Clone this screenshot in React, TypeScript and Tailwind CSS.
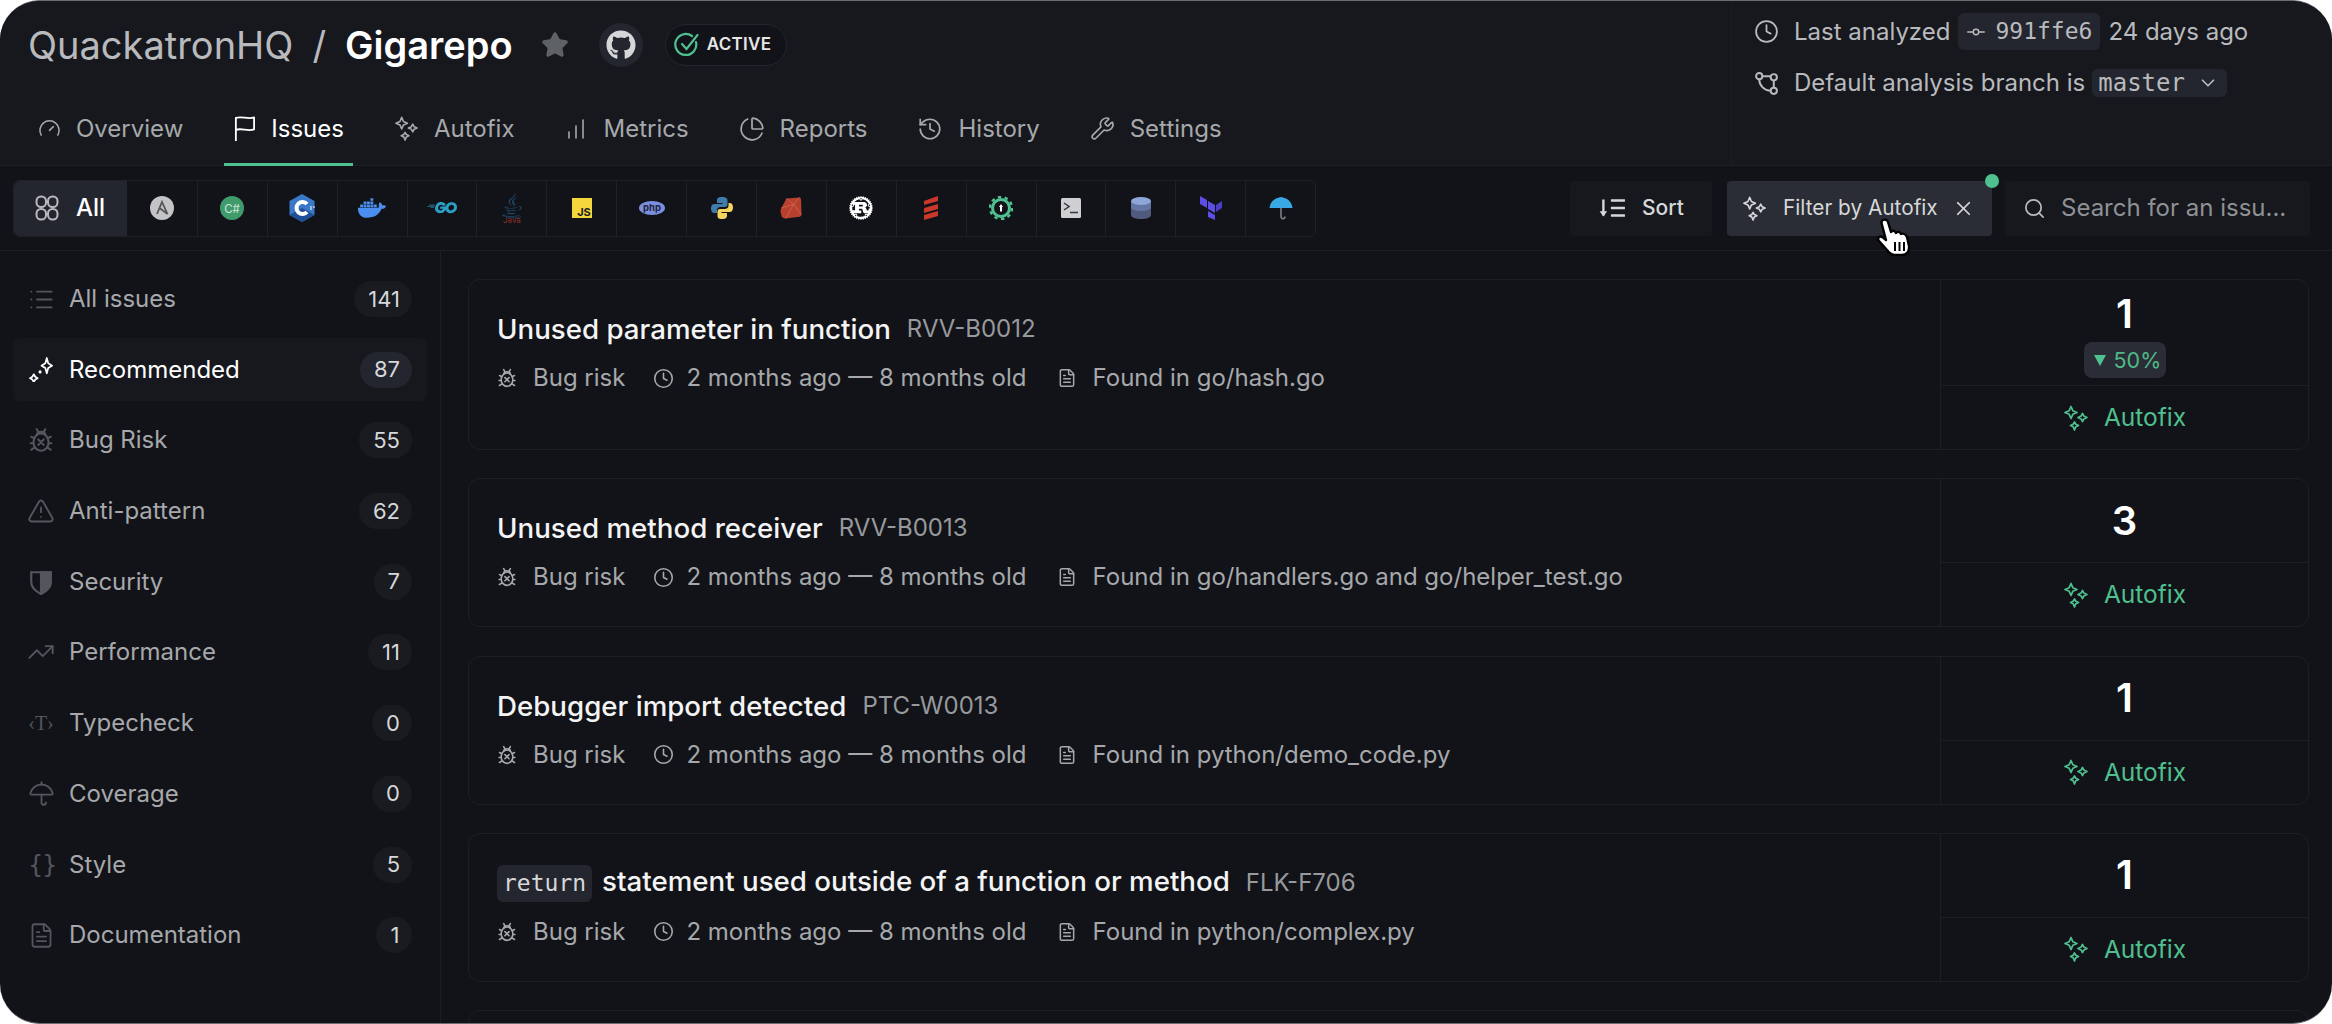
import type { ReactNode } from "react";
import {
    ChartNoAxesColumnIncreasing,
    ChartPie,
    ChevronDown,
    Clock,
    FileText,
    Gauge,
    GitCommitHorizontal,
    History,
    List,
    Search,
    Star,
    TrendingUp,
    TriangleAlert,
    Umbrella,
    Wrench,
    X,
} from "lucide-react";
import { FaDocker, FaGithub, FaJava, FaRust } from "react-icons/fa";
import { FaGolang } from "react-icons/fa6";

const mono = "[font-family:'DejaVu_Sans_Mono',monospace]";

function Sparkles({ className }: { className?: string }) {
    return (
        <svg viewBox="0 0 26 26" fill="none" stroke="currentColor" strokeWidth="1.7" strokeLinejoin="round" className={className}>
            <path d="M8 1.5 L9.8 5.7 L14 7.5 L9.8 9.3 L8 13.5 L6.2 9.3 L2 7.5 L6.2 5.7 Z" />
            <path d="M19.5 8.5 L20.9 11.1 L24 12.5 L20.9 13.9 L19.5 16.5 L18.1 13.9 L15 12.5 L18.1 11.1 Z" />
            <path d="M11.5 17 L12.8 19.2 L15.5 20.5 L12.8 21.8 L11.5 25 L10.2 21.8 L7.5 20.5 L10.2 19.2 Z" />
        </svg>
    );
}

function RecommendedIcon({ className }: { className?: string }) {
    return (
        <svg viewBox="0 0 26 26" fill="none" stroke="currentColor" strokeWidth="1.8" strokeLinejoin="round" className={className}>
            <path d="M18.5 1 L20 6.5 L24 9 L20 11.5 L18.5 17 L17 11.5 L13 9 L17 6.5 Z" />
            <path d="M5 18 L6.5 20.5 L9 22 L6.5 23.5 L5 26 L3.5 23.5 L1 22 L3.5 20.5 Z" />
            <circle cx="11.5" cy="15.5" r="1.6" fill="currentColor" stroke="none" />
        </svg>
    );
}

function BugIcon({ className }: { className?: string }) {
    return (
        <svg viewBox="0 0 24 24" fill="none" stroke="currentColor" strokeWidth="1.9" strokeLinecap="round" className={className}>
            <ellipse cx="12" cy="14" rx="7" ry="8" />
            <path d="M8 7.5 C8 3.5 16 3.5 16 7.5" />
            <path d="M9.5 11.5 L14.5 16.5 M14.5 11.5 L9.5 16.5" />
            <path d="M8 2 L9.5 4.5 M16 2 L14.5 4.5 M3 9 L6 10.5 M21 9 L18 10.5 M2.5 15 L5 15 M21.5 15 L19 15 M3 21 L6 19 M21 21 L18 19" />
        </svg>
    );
}

function ShieldHalf({ className }: { className?: string }) {
    return (
        <svg viewBox="0 0 24 24" fill="none" stroke="currentColor" strokeWidth="2" className={className}>
            <path d="M3 3 H21 V12 C21 17 17 20.5 12 23 C7 20.5 3 17 3 12 Z" />
            <path d="M12 3 H21 V12 C21 17 17 20.5 12 23 Z" fill="currentColor" />
        </svg>
    );
}

function BranchIcon({ className }: { className?: string }) {
    return (
        <svg viewBox="0 0 24 24" fill="none" stroke="currentColor" strokeWidth="1.9" className={className}>
            <circle cx="5" cy="5" r="3" />
            <circle cx="19" cy="6" r="3" />
            <circle cx="19" cy="19" r="3" />
            <path d="M8 5 H16 M5 8 C5 14 10 19 16 19 M19 9 V16" />
        </svg>
    );
}

function SortIcon({ className }: { className?: string }) {
    return (
        <svg viewBox="0 0 26 24" fill="none" stroke="currentColor" strokeWidth="2.2" className={className}>
            <path d="M5 4 V19" />
            <path d="M1.5 15 L5 20 L8.5 15 Z" fill="currentColor" stroke="none" />
            <path d="M12 5 H25 M12 12 H25 M12 19 H25" />
        </svg>
    );
}

function FlagIcon({ className }: { className?: string }) {
    return (
        <svg viewBox="0 0 24 28" fill="none" stroke="currentColor" strokeWidth="1.9" strokeLinejoin="round" className={className}>
            <path d="M3 27 V3 C9 0.5 15 5 22 2.5 V15 C15 17.5 9 13 3 15.5" />
        </svg>
    );
}

function AllIcon({ className }: { className?: string }) {
    return (
        <svg viewBox="0 0 24 26" fill="none" stroke="currentColor" strokeWidth="2" className={className}>
            <rect x="1.5" y="1.5" width="9.5" height="10.5" rx="4.5" />
            <rect x="13" y="1.5" width="9.5" height="10.5" rx="4.5" />
            <rect x="1.5" y="14" width="9.5" height="10.5" rx="4.5" />
            <rect x="13" y="14" width="9.5" height="10.5" rx="4.5" />
        </svg>
    );
}

function HandCursor() {
    return (
        <svg viewBox="0 0 36 38" className="absolute left-[148px] top-[37px] z-10 h-[38px] w-[36px]">
            <path
                d="M8 2 C10 1 12.5 2 13 4 L16 14 C18 12 20 12.5 21 15 C23 13 25 13.5 26 16 C28 15 31 16 32 19 L34 28 C34.5 33 32 37 27 37 L20 37 C16 37 14 35 12 32 L4 23 C1.5 20 5 17 8 19.5 L11 22 L6.5 5 C6.5 4 7 2.5 8 2 Z"
                fill="#fff"
                stroke="#000"
                strokeWidth="2.4"
                strokeLinejoin="round"
            />
            <path d="M20 24 V33 M24.5 24 V33 M29 24 V33" stroke="#000" strokeWidth="2" />
        </svg>
    );
}

const languageIcons: ReactNode[] = [
    <svg key="ansible" viewBox="0 0 24 24" className="h-6 w-6">
        <circle cx="12" cy="12" r="12" fill="#c4c4c6" />
        <path d="M7 18 L12 6 L17.5 18 L9.5 12" fill="none" stroke="#55575c" strokeWidth="1.8" />
    </svg>,
    <svg key="csharp" viewBox="0 0 24 24" className="h-6 w-6">
        <circle cx="12" cy="12" r="12" fill="#3f9b6a" />
        <text x="12" y="16.5" textAnchor="middle" fontSize="11.5" fill="#cfe6da" fontFamily="Inter, sans-serif">C#</text>
    </svg>,
    <svg key="cpp" viewBox="0 0 26 28" className="h-[28px] w-[26px]">
        <path d="M13 0 L25.5 7 V21 L13 28 L0.5 21 V7 Z" fill="#3b78c8" />
        <path d="M13 14 L25.5 21 L13 28 L0.5 21 Z" fill="#1f4f94" />
        <path d="M18 10 A6 6 0 1 0 18 18" fill="none" stroke="#fff" strokeWidth="4" />
        <path d="M21 13 H23 M24 13 H26 M21 15 H23" stroke="#fff" strokeWidth="1.2" />
    </svg>,
    <FaDocker key="docker" className="h-[28px] w-[28px] text-[#4a8ff0]" />,
    <FaGolang key="go" className="h-[30px] w-[30px] text-[#2b9fc4]" />,
    <div key="java" className="flex flex-col items-center">
        <FaJava className="h-[26px] w-[20px] text-[#1f4a70]" />
        <span className="-mt-[2px] text-[8px] leading-[8px] text-[#8c2f2a]">Java</span>
    </div>,
    <div key="js" className="relative h-5 w-5 bg-[#f5d73c]">
        <span className="absolute bottom-[0px] right-[1px] text-[11px] leading-[11px] font-bold text-[#222]">JS</span>
    </div>,
    <svg key="php" viewBox="0 0 26 14" className="h-[14px] w-[26px]">
        <ellipse cx="13" cy="7" rx="13" ry="7" fill="#7a8fe0" />
        <text x="13" y="10" textAnchor="middle" fontSize="9.5" fontWeight="700" fill="#20233a" fontFamily="Inter, sans-serif">php</text>
    </svg>,
    <svg key="python" viewBox="0 0 24 24" className="h-6 w-6">
        <path d="M12 1 C8 1 7 2.5 7 4.5 V7 H12.5 V8 H4.5 C2 8 1 10 1 12.5 C1 15 2 17 4.5 17 H7 V14 C7 12 8.5 11 10.5 11 H15 C16.5 11 17.5 10 17.5 8.5 V4.5 C17.5 2.5 16 1 12 1 Z" fill="#3f7cab" />
        <path d="M12 23 C16 23 17 21.5 17 19.5 V17 H11.5 V16 H19.5 C22 16 23 14 23 11.5 C23 9 22 7 19.5 7 H18.5 V10 C18.5 12 16.5 13 14.5 13 H10 C8.5 13 7.5 14 7.5 15.5 V19.5 C7.5 21.5 8 23 12 23 Z" fill="#f4d45c" />
    </svg>,
    <svg key="ruby" viewBox="0 0 24 24" className="h-[22px] w-[22px]">
        <path d="M7 1.5 L21 0.5 Q23 0.5 23 3 L23.5 19 Q23.5 21 21.5 21.5 L6 23.5 Q3 23.5 2 21.5 L0.5 16 Q0.5 14 1.5 12 Z" fill="#b8402f" />
        <path d="M7 1.5 L15 8 L21 0.5 M15 8 L23 19 M15 8 L6 23.5 M1.5 12 L15 8" stroke="#d9705e" strokeWidth="0.7" fill="none" />
    </svg>,
    <FaRust key="rust" className="h-[24px] w-[24px] text-white" />,
    <svg key="scala" viewBox="0 0 16 24" className="h-[24px] w-[16px]">
        <path d="M1 5 L15 0 V5 L1 9 Z M1 12 L15 8 V13 L1 17 Z M1 19 L15 15 V20 L1 24 Z" fill="#c9382a" />
    </svg>,
    <svg key="secrets" viewBox="0 0 24 24" className="h-6 w-6">
        <circle cx="12" cy="12" r="8.5" fill="none" stroke="#4fc08f" strokeWidth="3" />
        <circle cx="12" cy="12" r="11" fill="none" stroke="#4fc08f" strokeWidth="2.4" strokeDasharray="3.4 3.5" />
        <path d="M12 8 L14 11 H13 V15.5 H11 V11 H10 Z" fill="#fff" />
    </svg>,
    <svg key="shell" viewBox="0 0 20 20" className="h-5 w-5">
        <rect width="20" height="20" rx="1.5" fill="#cfcfd1" />
        <path d="M3 5 L8 8.5 L3 12 M9 14.5 H17" fill="none" stroke="#33363c" strokeWidth="1.5" />
    </svg>,
    <svg key="sql" viewBox="0 0 20 22" className="h-[22px] w-[20px]">
        <path d="M0 4 V18 C0 20.5 4.5 22 10 22 C15.5 22 20 20.5 20 18 V4 Z" fill="#4f5a7c" />
        <path d="M0 4 V10 C0 12.5 4.5 14 10 14 C15.5 14 20 12.5 20 10 V4 Z" fill="#6676a3" />
        <ellipse cx="10" cy="4" rx="10" ry="4" fill="#8fa6d8" />
    </svg>,
    <svg key="terraform" viewBox="0 0 24 24" className="h-6 w-6">
        <path d="M1 0 L8 4 V12 L1 8 Z M9 5 L16 9 V17 L9 13 Z M9 15 L16 19 V24 L9 21 Z" fill="#5c4ee5" />
        <path d="M17 9 L23 5 V12 L17 16 Z" fill="#4a3ec4" />
    </svg>,
    <svg key="coverage" viewBox="0 0 24 24" className="h-6 w-6">
        <path d="M0.5 12 C1.5 5 6 2 12 1 C18 2 22.5 5 23.5 12 Z" fill="#39a9e6" />
        <path d="M12 12 V20 C12 23.5 16 23.5 16 20.5" fill="none" stroke="#7b8087" strokeWidth="1.6" />
    </svg>,
];

const navTabs = [
    { label: "Overview", icon: <Gauge className="h-[23px] w-[23px]" strokeWidth={1.6} /> },
    { label: "Issues", icon: <FlagIcon className="h-[27px] w-[23px]" />, active: true },
    { label: "Autofix", icon: <Sparkles className="h-[25px] w-[25px]" /> },
    { label: "Metrics", icon: <ChartNoAxesColumnIncreasing className="h-[24px] w-[24px]" strokeWidth={1.6} /> },
    { label: "Reports", icon: <ChartPie className="h-[26px] w-[26px]" strokeWidth={1.6} /> },
    { label: "History", icon: <History className="h-[26px] w-[26px]" strokeWidth={1.6} /> },
    { label: "Settings", icon: <Wrench className="h-[25px] w-[25px]" strokeWidth={1.6} /> },
];

const sideItems = [
    { label: "All issues", count: 141, icon: <List className="h-[27px] w-[27px]" strokeWidth={1.6} /> },
    { label: "Recommended", count: 87, active: true, icon: <RecommendedIcon className="h-[25px] w-[25px] text-white" /> },
    { label: "Bug Risk", count: 55, icon: <BugIcon className="h-[26px] w-[26px]" /> },
    { label: "Anti-pattern", count: 62, icon: <TriangleAlert className="h-[28px] w-[28px]" strokeWidth={1.6} /> },
    { label: "Security", count: 7, icon: <ShieldHalf className="h-[26px] w-[26px]" /> },
    { label: "Performance", count: 11, icon: <TrendingUp className="h-[28px] w-[28px]" strokeWidth={1.6} /> },
    { label: "Typecheck", count: 0, icon: <span className="text-[20px] leading-none [font-family:'Liberation_Serif',serif]">‹T›</span> },
    { label: "Coverage", count: 0, icon: <Umbrella className="h-[27px] w-[27px]" strokeWidth={1.6} /> },
    {
        label: "Style",
        count: 5,
        icon: (
            <span className={`flex gap-[3px] text-[24px] leading-none ${mono}`}>
                <span className="w-[11px]">{"{"}</span>
                <span className="w-[11px]">{"}"}</span>
            </span>
        ),
    },
    { label: "Documentation", count: 1, icon: <FileText className="h-[27px] w-[27px]" strokeWidth={1.6} /> },
];

type Issue = {
    title: ReactNode;
    code: string;
    file: string;
    count: number;
    delta?: string;
};

const issues: Issue[] = [
    { title: "Unused parameter in function", code: "RVV-B0012", file: "go/hash.go", count: 1, delta: "50%" },
    { title: "Unused method receiver", code: "RVV-B0013", file: "go/handlers.go and go/helper_test.go", count: 3 },
    { title: "Debugger import detected", code: "PTC-W0013", file: "python/demo_code.py", count: 1 },
    {
        title: (
            <>
                <code className={`mr-[10px] inline-block h-[37px] rounded-[6px] bg-[#23262e] px-[6px] text-[23px] leading-[37px] font-normal text-[#d6d7d9] ${mono}`}>return</code>
                statement used outside of a function or method
            </>
        ),
        code: "FLK-F706",
        file: "python/complex.py",
        count: 1,
    },
];

function IssueCard({ issue }: { issue: Issue }) {
    return (
        <div className="flex shrink-0 rounded-[12px] border border-[#1d1f25]">
            <div className="flex-1 pl-[28px] pt-[32px]">
                <div className="flex h-[34px] items-center">
                    <h3 className="text-[27.7px] leading-[34px] font-medium text-[#f4f4f5]">{issue.title}</h3>
                    <span className="ml-[16px] text-[24px] text-[#97999d]">{issue.code}</span>
                </div>
                <div className="mt-[17px] flex h-[30px] items-center text-[24px] text-[#a6a8ab]">
                    <BugIcon className="mr-[16px] h-[20px] w-[20px]" />
                    <span>Bug risk</span>
                    <Clock className="ml-[28px] mr-[12px] h-[21px] w-[21px]" strokeWidth={1.8} />
                    <span>2 months ago — 8 months old</span>
                    <FileText className="ml-[30px] mr-[16px] h-[20px] w-[20px]" strokeWidth={1.8} />
                    <span>Found in {issue.file}</span>
                </div>
            </div>
            <div className="flex w-[368px] flex-col border-l border-[#1d1f25]">
                {issue.delta ? (
                    <div className="flex h-[105px] flex-col items-center pt-[11px]">
                        <span className="text-[40px] leading-[46px] font-semibold text-white">{issue.count}</span>
                        <span className="mt-[5px] flex h-[36px] w-[82px] items-center gap-[8px] rounded-[8px] bg-[#2a2d35] pl-[10px] text-[21.5px] text-[#4fb98a]">
                            <svg viewBox="0 0 12 12" className="h-[12px] w-[12px] text-[#4fc08f]">
                                <path d="M0 1 H12 L6 12 Z" fill="currentColor" />
                            </svg>
                            {issue.delta}
                        </span>
                    </div>
                ) : (
                    <div className="flex h-[83px] items-center justify-center">
                        <span className="text-[40px] leading-[46px] font-semibold text-white">{issue.count}</span>
                    </div>
                )}
                <div className="flex h-[64px] items-center justify-center gap-[15px] border-t border-[#1d1f25] text-[24.5px] text-[#4fc08f]">
                    <Sparkles className="h-[26px] w-[26px]" />
                    <span>Autofix</span>
                </div>
            </div>
        </div>
    );
}

export default function App() {
    return (
        <div className="h-[1024px] w-[2332px] overflow-hidden bg-white [font-family:Inter,sans-serif]">
            <div className="flex h-full flex-col overflow-hidden rounded-[40px] border-y border-[#6b6c6f] bg-[#121318]">
                <header className="flex h-[165px] shrink-0 border-b border-[#1c1e24] bg-[#16181d]">
                    <div className="flex flex-1 flex-col">
                        <div className="flex h-[88px] items-center pl-[28px]">
                            <span className="text-[38px] text-[#b9babd]">QuackatronHQ</span>
                            <span className="mx-[19px] text-[38px] text-[#b9babd]">/</span>
                            <span className="text-[38px] font-semibold text-white">Gigarepo</span>
                            <Star className="ml-[28px] h-[28px] w-[28px] fill-[#5e6165] text-[#5e6165]" />
                            <span className="ml-[30px] flex h-[44px] w-[44px] items-center justify-center rounded-full bg-[#23262e]">
                                <FaGithub className="h-[30px] w-[30px] text-[#d5d6d8]" />
                            </span>
                            <span className="ml-[22px] flex h-[42px] items-center gap-[7px] rounded-full border border-[#23262e] bg-[#121318] pl-[8px] pr-[15px] text-[17px] font-semibold tracking-[0.3px] text-[#e6e6e7]">
                                <svg viewBox="0 0 26 26" fill="none" stroke="#4fc08f" strokeWidth="2.2" strokeLinecap="round" className="h-[26px] w-[26px]">
                                    <path d="M22 10 A10.5 10.5 0 1 1 18 4" />
                                    <path d="M8 12 L12.5 17 L23.5 3" />
                                </svg>
                                ACTIVE
                            </span>
                        </div>
                        <nav className="flex flex-1 gap-[32px] pl-[29px]">
                            {navTabs.map((tab) => (
                                <div
                                    key={tab.label}
                                    className={`-mb-px flex items-center gap-[15px] border-b-[3px] px-[9px] pt-[5px] text-[24px] ${
                                        tab.active ? "border-[#4fc08f] text-white" : "border-transparent text-[#a6a8ab]"
                                    }`}
                                >
                                    {tab.icon}
                                    <span>{tab.label}</span>
                                </div>
                            ))}
                        </nav>
                    </div>
                    <div className="w-[601px] border-l border-[#1c1e24] pl-[22px] pt-[12px] text-[24px] text-[#b9babd]">
                        <div className="flex h-[37px] items-center">
                            <Clock className="mr-[15px] h-[25px] w-[25px]" strokeWidth={1.7} />
                            <span>Last analyzed</span>
                            <span className={`mx-[8px] flex h-[37px] items-center gap-[8px] rounded-[6px] bg-[#23262e] pl-[7px] pr-[8px] text-[23px] ${mono}`}>
                                <GitCommitHorizontal className="h-[22px] w-[22px]" strokeWidth={1.6} />
                                991ffe6
                            </span>
                            <span>24 days ago</span>
                        </div>
                        <div className="mt-[19px] flex h-[28px] items-center">
                            <BranchIcon className="mr-[15px] h-[25px] w-[25px]" />
                            <span>Default analysis branch is</span>
                            <span className={`ml-[7px] flex h-[28px] items-center gap-[12px] rounded-[6px] bg-[#23262e] pl-[6px] pr-[8px] text-[24px] ${mono}`}>
                                master
                                <ChevronDown className="h-[22px] w-[22px]" strokeWidth={1.8} />
                            </span>
                        </div>
                    </div>
                </header>

                <div className="flex h-[85px] shrink-0 items-center justify-between border-b border-[#1c1e24] px-[13px] pr-[22px]">
                    <div className="flex h-[57px] rounded-[6px] border border-[#1f2127]">
                        <div className="flex w-[113px] items-center gap-[17px] rounded-l-[6px] bg-[#23262e] pl-[21px] text-[24px] font-medium text-white">
                            <AllIcon className="h-[26px] w-[24px] text-[#b9babd]" />
                            <span>All</span>
                        </div>
                        {languageIcons.map((icon, i) => (
                            <div key={i} className={`flex w-[69.9px] items-center justify-center ${i > 0 ? "border-l border-[#1f2127]" : ""}`}>
                                {icon}
                            </div>
                        ))}
                    </div>
                    <div className="flex h-[55px] items-stretch">
                        <div className="flex w-[142px] items-center justify-center gap-[16px] rounded-[4px] bg-[#16181d] text-[21px] font-medium text-[#d6d7d9]">
                            <SortIcon className="h-[26px] w-[28px]" />
                            <span>Sort</span>
                        </div>
                        <div className="relative ml-[15px] flex w-[265px] items-center rounded-[4px] bg-[#2a2d35] pl-[15px] text-[20.8px] text-[#d6d7d9]">
                            <Sparkles className="h-[25px] w-[25px]" />
                            <span className="ml-[16px]">Filter by Autofix</span>
                            <X className="ml-[14px] h-[23px] w-[23px]" strokeWidth={1.8} />
                            <span className="absolute -right-[7px] -top-[7px] h-[14px] w-[14px] rounded-full bg-[#4fc08f]" />
                            <HandCursor />
                        </div>
                        <div className="ml-[13px] flex w-[305px] items-center gap-[15px] rounded-[4px] bg-[#16181d] pl-[18px] text-[24px] text-[#8f9195]">
                            <Search className="h-[23px] w-[23px] text-[#b9babd]" strokeWidth={1.8} />
                            <span>Search for an issu...</span>
                        </div>
                    </div>
                </div>

                <div className="flex min-h-0 flex-1">
                    <aside className="flex w-[441px] shrink-0 flex-col gap-[7.7px] border-r border-[#1c1e24] px-[13px] pt-[16.5px]">
                        {sideItems.map((item) => (
                            <div
                                key={item.label}
                                className={`flex h-[63px] shrink-0 items-center rounded-[6px] pl-[14px] pr-[15px] text-[24px] ${
                                    item.active ? "bg-[#16181d] text-white" : "text-[#a6a8ab]"
                                }`}
                            >
                                <span className="flex w-[28px] justify-center text-[#53565c]">{item.icon}</span>
                                <span className="ml-[14px] flex-1">{item.label}</span>
                                <span
                                    className={`flex h-[36px] min-w-[36px] items-center justify-center rounded-full pl-[14px] pr-[12px] text-[22px] ${
                                        item.active ? "bg-[#23262e] text-[#d6d7d9]" : "bg-[#191b20] text-[#d6d7d9]"
                                    }`}
                                >
                                    {item.count}
                                </span>
                            </div>
                        ))}
                    </aside>
                    <main className="flex min-w-0 flex-1 flex-col gap-[28.3px] overflow-hidden pl-[27px] pr-[23px] pt-[28px]">
                        {issues.map((issue) => (
                            <IssueCard key={issue.code} issue={issue} />
                        ))}
                        <div className="h-[60px] shrink-0 rounded-t-[12px] border border-[#1d1f25]" />
                    </main>
                </div>
            </div>
        </div>
    );
}
